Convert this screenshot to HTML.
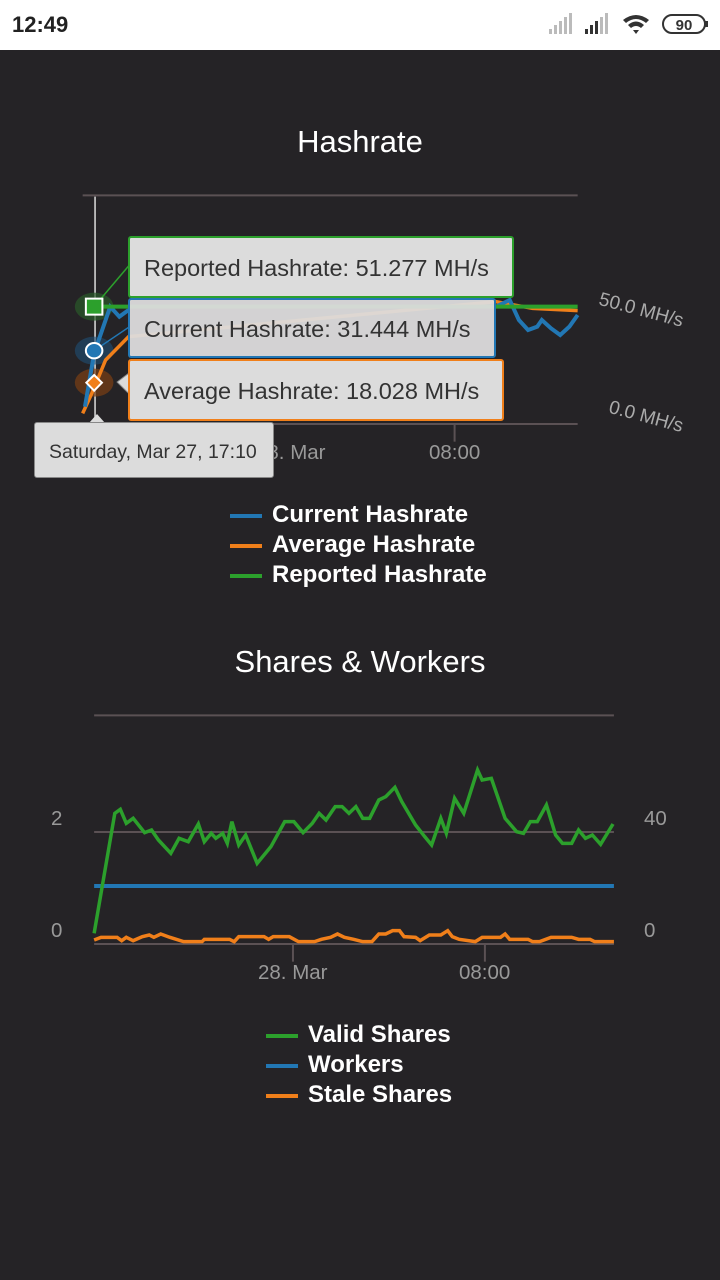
<!DOCTYPE html>
<html><head><meta charset="utf-8"><style>
body{margin:0;width:720px;height:1280px;background:#252326;font-family:"Liberation Sans",sans-serif;position:relative;overflow:hidden}
.sb{position:absolute;left:0;top:0;width:720px;height:50px;background:#fff}
.t{position:absolute;font-family:"Liberation Sans",sans-serif}
.tip{position:absolute;background:#dcdcdc;border:2px solid;border-radius:3px;color:#333;font-size:23.5px;box-sizing:border-box;padding-left:14px;line-height:1;white-space:nowrap}
.leg{position:absolute;color:#fff;font-weight:bold;font-size:24px}
.leg i{display:inline-block;width:32px;height:4px;margin-right:10px;vertical-align:middle}
</style></head><body>
<div class="sb"></div>
<div class="t" style="left:12px;top:12px;font-size:22px;font-weight:bold;color:#222">12:49</div>
<svg style="position:absolute;left:545px;top:12px" width="170" height="26">
<g fill="#bbb"><rect x="4" y="17" width="3" height="5"/><rect x="9" y="13" width="3" height="9"/><rect x="14" y="9" width="3" height="13"/><rect x="19" y="5" width="3" height="17"/><rect x="24" y="1" width="3" height="21"/></g>
<g fill="#333"><rect x="40" y="17" width="3" height="5"/><rect x="45" y="13" width="3" height="9"/><rect x="50" y="9" width="3" height="13"/></g><g fill="#bbb"><rect x="55" y="5" width="3" height="17"/><rect x="60" y="1" width="3" height="21"/></g>
<path d="M78 8 Q91 -2 104 8 L101 11 Q91 3 81 11Z M83 13 Q91 6 99 13 L96 16 Q91 12 86 16Z M88 18 L91 22 L94 18Z" fill="#333"/>
<rect x="118" y="3" width="42" height="18" rx="9" fill="none" stroke="#333" stroke-width="2"/><rect x="160" y="9" width="3" height="6" fill="#333"/>
<text x="139" y="18" font-size="15" font-weight="bold" text-anchor="middle" fill="#333" font-family="Liberation Sans">90</text></svg>

<div class="t" style="left:0;width:720px;text-align:center;top:124px;font-size:31px;color:#fff">Hashrate</div>
<svg style="position:absolute;left:0;top:180px" width="720" height="300" viewBox="0 0 1568 900" preserveAspectRatio="none">
<line x1="180" y1="46" x2="1258" y2="46" stroke="#5b5154" stroke-width="2" vector-effect="non-scaling-stroke"/>
<line x1="180" y1="732" x2="1258" y2="732" stroke="#5b5154" stroke-width="2" vector-effect="non-scaling-stroke"/>
<line x1="990" y1="732" x2="990" y2="785" stroke="#5b5154" stroke-width="2" vector-effect="non-scaling-stroke"/>
<line x1="207" y1="50" x2="207" y2="730" stroke="#ddd" stroke-width="1.5" vector-effect="non-scaling-stroke"/>
<circle cx="205" cy="380" r="42" fill="#2a5a2a" opacity=".7"/>
<circle cx="205" cy="512" r="42" fill="#1f4f75" opacity=".6"/>
<circle cx="205" cy="608" r="42" fill="#7a3e14" opacity=".7"/>
<path d="M180 700 L200 640 L230 540 L280 470 L1080 365 L1160 385 L1258 392" fill="none" stroke="#f07f1a" stroke-width="3.5" vector-effect="non-scaling-stroke"/>
<path d="M185 680 L205 520 L240 380 L260 410 L280 390 M1080 380 L1110 360 L1130 420 L1150 450 L1170 440 L1180 420 L1200 445 L1220 465 L1240 440 L1258 405" fill="none" stroke="#2277b4" stroke-width="4" vector-effect="non-scaling-stroke"/>
<path d="M205 380 L1258 380" fill="none" stroke="#2ca02c" stroke-width="4" vector-effect="non-scaling-stroke"/>
<path d="M255 606 L280 580 L280 640Z" fill="#dcdcdc" stroke="#888" stroke-width="1" vector-effect="non-scaling-stroke"/>
<path d="M205 380 L280 258" stroke="#2ca02c" stroke-width="1.5" vector-effect="non-scaling-stroke"/>
<path d="M205 512 L280 442" stroke="#2277b4" stroke-width="1.5" vector-effect="non-scaling-stroke"/>
<rect x="187" y="356" width="36" height="48" fill="#2ca02c" stroke="#fff" stroke-width="2" vector-effect="non-scaling-stroke"/>
<ellipse cx="205" cy="512" rx="18" ry="23" fill="#2277b4" stroke="#fff" stroke-width="2" vector-effect="non-scaling-stroke"/>
<path d="M205 585 L222 608 L205 632 L188 608Z" fill="#f07f1a" stroke="#fff" stroke-width="2" vector-effect="non-scaling-stroke"/>
</svg>
<div class="tip" style="left:128px;top:236px;width:386px;height:62px;border-color:#2ca02c;padding-top:19px">Reported Hashrate: 51.277 MH/s</div>
<div class="tip" style="left:128px;top:298px;width:368px;height:60px;border-color:#2277b4;padding-top:18px;background:rgba(220,220,220,.95)">Current Hashrate: 31.444 MH/s</div>
<div class="tip" style="left:128px;top:359px;width:376px;height:62px;border-color:#f07f1a;padding-top:19px">Average Hashrate: 18.028 MH/s</div>
<div class="t" style="left:602px;top:289px;font-size:19px;color:#aaa;transform:rotate(15deg);transform-origin:left top">50.0 MH/s</div>
<div class="t" style="left:612px;top:397px;font-size:19px;color:#aaa;transform:rotate(15deg);transform-origin:left top">0.0 MH/s</div>
<div class="t" style="left:256px;top:441px;font-size:20.5px;color:#999">28. Mar</div>
<div class="t" style="left:429px;top:441px;font-size:20.5px;color:#999">08:00</div>
<div style="position:absolute;left:89px;top:414px;width:0;height:0;border-left:8px solid transparent;border-right:8px solid transparent;border-bottom:9px solid #dcdcdc"></div>
<div class="tip" style="left:34px;top:422px;width:240px;height:56px;border:1px solid #888;font-size:19.5px;padding-top:20px">Saturday, Mar 27, 17:10</div>

<div class="leg" style="left:230px;top:500px;line-height:30px"><i style="background:#2277b4"></i>Current Hashrate<br><i style="background:#f07f1a"></i>Average Hashrate<br><i style="background:#2ca02c"></i>Reported Hashrate</div>

<div class="t" style="left:0;width:720px;text-align:center;top:644px;font-size:31px;color:#fff">Shares &amp; Workers</div>
<svg style="position:absolute;left:0;top:700px" width="720" height="300" viewBox="0 0 1568 900" preserveAspectRatio="none">
<line x1="205" y1="46" x2="1337" y2="46" stroke="#5b5154" stroke-width="2" vector-effect="non-scaling-stroke"/>
<line x1="205" y1="396" x2="1337" y2="396" stroke="#5b5154" stroke-width="2" vector-effect="non-scaling-stroke"/>
<line x1="205" y1="732" x2="1337" y2="732" stroke="#5b5154" stroke-width="2" vector-effect="non-scaling-stroke"/>
<line x1="638" y1="732" x2="638" y2="785" stroke="#5b5154" stroke-width="2" vector-effect="non-scaling-stroke"/>
<line x1="1056" y1="732" x2="1056" y2="785" stroke="#5b5154" stroke-width="2" vector-effect="non-scaling-stroke"/>
<line x1="205" y1="558" x2="1337" y2="558" stroke="#2277b4" stroke-width="4" vector-effect="non-scaling-stroke"/>
<path d="M205 720 L220 712 L255 712 L265 722 L275 712 L290 722 L310 710 L325 705 L335 712 L350 702 L370 712 L400 725 L440 725 L445 718 L500 718 L510 725 L520 710 L575 710 L585 718 L595 710 L630 710 L650 725 L685 725 L700 718 L720 712 L735 702 L750 712 L770 718 L790 725 L810 725 L825 702 L840 702 L855 692 L870 692 L880 710 L905 712 L915 722 L935 705 L960 705 L975 692 L985 710 L1000 718 L1035 725 L1050 712 L1090 712 L1100 702 L1110 718 L1150 718 L1160 725 L1175 725 L1200 712 L1245 712 L1260 718 L1285 718 L1295 725 L1337 725" fill="none" stroke="#f07f1a" stroke-width="3.5" vector-effect="non-scaling-stroke"/>
<path d="M205 700 L250 340 L262 328 L275 370 L290 355 L315 398 L330 390 L345 420 L372 460 L390 415 L410 425 L432 372 L445 425 L460 400 L470 415 L485 400 L495 430 L505 365 L520 435 L535 405 L560 490 L590 440 L620 365 L640 365 L660 398 L680 370 L695 340 L710 360 L730 320 L745 320 L760 340 L775 320 L790 355 L805 355 L825 300 L840 290 L860 262 L875 305 L905 375 L925 410 L940 435 L960 355 L972 400 L990 295 L1010 340 L1040 210 L1050 240 L1070 235 L1100 355 L1125 395 L1140 400 L1155 365 L1170 365 L1190 315 L1210 405 L1225 430 L1245 430 L1260 390 L1275 415 L1290 405 L1308 433 L1335 372" fill="none" stroke="#2ca02c" stroke-width="3.5" vector-effect="non-scaling-stroke"/>
</svg>
<div class="t" style="left:51px;top:807px;font-size:20.5px;color:#999">2</div>
<div class="t" style="left:51px;top:919px;font-size:20.5px;color:#999">0</div>
<div class="t" style="left:644px;top:807px;font-size:20.5px;color:#999">40</div>
<div class="t" style="left:644px;top:919px;font-size:20.5px;color:#999">0</div>
<div class="t" style="left:258px;top:961px;font-size:20.5px;color:#999">28. Mar</div>
<div class="t" style="left:459px;top:961px;font-size:20.5px;color:#999">08:00</div>
<div class="leg" style="left:266px;top:1020px;line-height:30px"><i style="background:#2ca02c"></i>Valid Shares<br><i style="background:#2277b4"></i>Workers<br><i style="background:#f07f1a"></i>Stale Shares</div>
</body></html>
